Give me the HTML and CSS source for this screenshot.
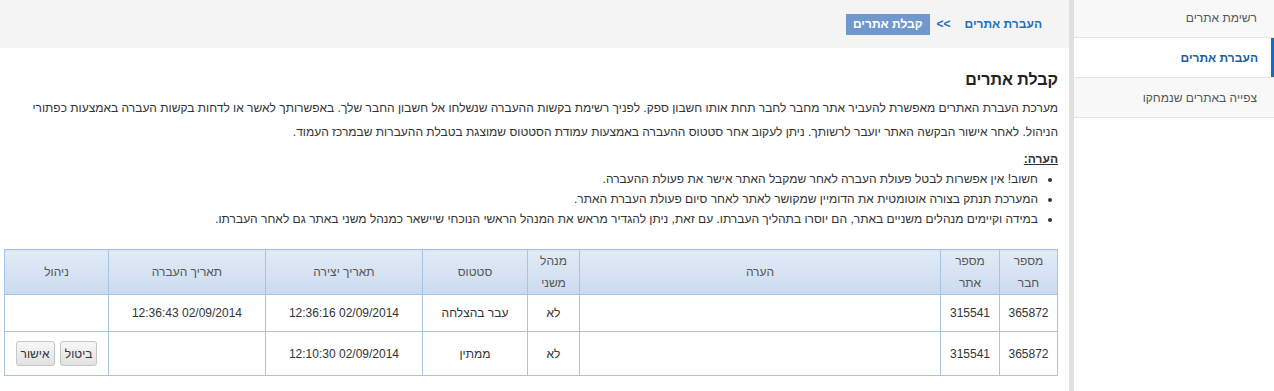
FILE: index.html
```html
<!DOCTYPE html>
<html lang="he" dir="rtl">
<head>
  <meta charset="UTF-8">
  <meta name="viewport" content="width=device-width, initial-scale=1.0">
  <title>קבלת אתרים</title>
  <link rel="stylesheet" href="styles.css">
</head>
<body>
  <div class="layout">
    <ul class="side-menu">
      <li><a href="#">רשימת אתרים</a></li>
      <li class="active"><a href="#">העברת אתרים</a></li>
      <li><a href="#">צפייה באתרים שנמחקו</a></li>
    </ul>
    <div class="divider"></div>
    <div class="main">
      <div class="topbar">
        <a href="#" class="crumb-link">העברת אתרים</a>
        <span class="crumb-sep">&gt;&gt;</span>
        <span class="crumb-current">קבלת אתרים</span>
      </div>
      <div class="content">
        <h2>קבלת אתרים</h2>
        <p class="intro">מערכת העברת האתרים מאפשרת להעביר אתר מחבר לחבר תחת אותו חשבון ספק. לפניך רשימת בקשות ההעברה שנשלחו אל חשבון החבר שלך. באפשרותך לאשר או לדחות בקשות העברה באמצעות כפתורי הניהול. לאחר אישור הבקשה האתר יועבר לרשותך. ניתן לעקוב אחר סטטוס ההעברה באמצעות עמודת הסטטוס שמוצגת בטבלת ההעברות שבמרכז העמוד.</p>
        <p class="note-title">הערה:</p>
        <ul class="notes">
          <li>חשוב! אין אפשרות לבטל פעולת העברה לאחר שמקבל האתר אישר את פעולת ההעברה.</li>
          <li>המערכת תנתק בצורה אוטומטית את הדומיין שמקושר לאתר לאחר סיום פעולת העברת האתר.</li>
          <li>במידה וקיימים מנהלים משניים באתר, הם יוסרו בתהליך העברתו. עם זאת, ניתן להגדיר מראש את המנהל הראשי הנוכחי שיישאר כמנהל משני באתר גם לאחר העברתו.</li>
        </ul>
        <table class="transfers">
          <colgroup>
            <col style="width: 58px">
            <col style="width: 59px">
            <col style="width: 361px">
            <col style="width: 52px">
            <col style="width: 105px">
            <col style="width: 157px">
            <col style="width: 157px">
            <col style="width: 104px">
          </colgroup>
          <thead>
            <tr>
              <th>מספר<br>חבר</th>
              <th>מספר<br>אתר</th>
              <th>הערה</th>
              <th>מנהל<br>משני</th>
              <th>סטטוס</th>
              <th>תאריך יצירה</th>
              <th>תאריך העברה</th>
              <th>ניהול</th>
            </tr>
          </thead>
          <tbody>
            <tr>
              <td>365872</td>
              <td>315541</td>
              <td></td>
              <td>לא</td>
              <td>עבר בהצלחה</td>
              <td><bdi>12:36:16 02/09/2014</bdi></td>
              <td><bdi>12:36:43 02/09/2014</bdi></td>
              <td></td>
            </tr>
            <tr>
              <td>365872</td>
              <td>315541</td>
              <td></td>
              <td>לא</td>
              <td>ממתין</td>
              <td><bdi>12:10:30 02/09/2014</bdi></td>
              <td></td>
              <td class="actions">
                <button class="btn">ביטול</button>
                <button class="btn">אישור</button>
              </td>
            </tr>
          </tbody>
        </table>
      </div>
    </div>
  </div>
</body>
</html>
```

FILE: styles.css
```css
body {
  margin: 0;
  font-family: 'Liberation Sans', Arial, sans-serif;
  font-size: 12px;
  color: #333;
  background-color: #fff;
}
.layout {
  display: flex;
  min-height: 391px;
}
.side-menu {
  list-style: none;
  width: 200px;
  margin: -2px 0 0 0;
  padding: 0;
  flex-shrink: 0;
}
.side-menu li {
  height: 39px;
  border-bottom: 1px solid #e4e4e4;
  background-color: #f8f8f8;
  display: flex;
  align-items: center;
}
.side-menu li a {
  padding-right: 17px;
  font-size: 12px;
  color: #555;
  text-decoration: none;
}
.side-menu li.active {
  background-color: #fff;
  box-shadow: inset -3px 0 0 #0f6fc6;
}
.side-menu li.active a {
  color: #1f5e9c;
  font-weight: bold;
  padding-right: 16px;
}
.divider {
  width: 5px;
  background-color: #e0e0e0;
  flex-shrink: 0;
}
.main {
  flex: 1;
}
.topbar {
  height: 48px;
  background-color: #f4f4f4;
  display: flex;
  align-items: center;
  padding-right: 27px;
  margin-left: 1px;
}
.crumb-link {
  color: #2370bd;
  font-weight: bold;
  font-size: 12px;
  text-decoration: none;
}
.crumb-sep {
  color: #2370bd;
  font-weight: bold;
  font-size: 12px;
  margin: 0 14px 0 7px;
}
.crumb-current {
  background-color: #7198cd;
  color: #fff;
  font-weight: bold;
  font-size: 12px;
  padding: 3px 7px;
  line-height: 15px;
}
.content {
  padding: 0 11px 0 5px;
}
.content h2 {
  font-size: 16px;
  color: #222;
  margin: 20px 0 0 0;
  line-height: 24px;
}
.intro {
  margin: 4px 0 0 0;
  line-height: 24px;
}
.note-title {
  font-weight: bold;
  text-decoration: underline;
  margin: 5px 0 0 0;
  line-height: 20px;
}
.notes {
  margin: 0 0 20px 0;
  padding-right: 20px;
  line-height: 20px;
}
.transfers {
  width: 100%;
  table-layout: fixed;
  border-collapse: collapse;
  border: 1px solid #a8c3e6;
}
.transfers th {
  background: linear-gradient(#e2ebf7, #cadbee);
  border: 1px solid #a8c3e6;
  font-weight: normal;
  color: #555;
  height: 44px;
  padding: 0 4px;
  line-height: 22px;
}
.transfers td {
  border: 1px solid #a8c3e6;
  text-align: center;
  padding: 10px 8px;
  line-height: 16px;
}
.transfers td.actions {
  padding: 9px 4px;
}
.btn {
  font-family: 'Liberation Sans', Arial, sans-serif;
  font-size: 12px;
  color: #333;
  height: 25px;
  padding: 0 4px;
  margin: 0 1px;
  background: linear-gradient(#f7f7f7, #e1e1e1);
  border: 1px solid #c6c6c6;
  border-radius: 3px;
  cursor: pointer;
}
```
